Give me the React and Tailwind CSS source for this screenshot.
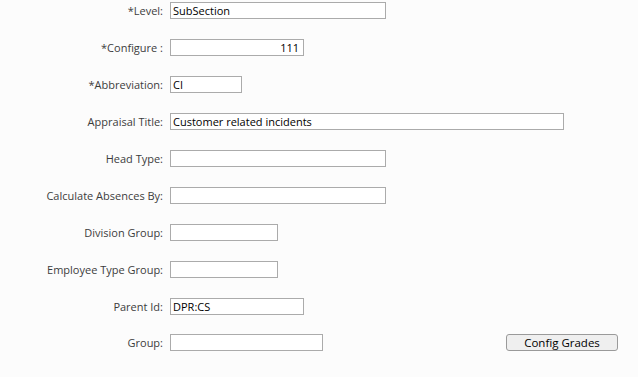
import React from "react";

const rows = [
  { label: "*Level:", value: "SubSection", w: "w-[216px]" },
  { label: "*Configure :", value: "111", w: "w-[134px]", right: true },
  { label: "*Abbreviation:", value: "CI", w: "w-[72px]" },
  { label: "Appraisal Title:", value: "Customer related incidents", w: "w-[394px]" },
  { label: "Head Type:", value: "", w: "w-[216px]" },
  { label: "Calculate Absences By:", value: "", w: "w-[216px]" },
  { label: "Division Group:", value: "", w: "w-[108px]" },
  { label: "Employee Type Group:", value: "", w: "w-[108px]" },
  { label: "Parent Id:", value: "DPR:CS", w: "w-[134px]" },
];

const font = { fontFamily: '"Open Sans", "Noto Sans", sans-serif' };

const Field = ({ value, w, right }) => (
  <div
    className={`${w} h-[17px] border border-[#ababab] bg-white flex items-center px-[2px] text-[11px] text-black leading-none ${
      right ? "justify-end pr-[4px]" : ""
    }`}
    style={font}
  >
    {value}
  </div>
);

const Label = ({ children }) => (
  <div
    className="w-[164px] pr-[1px] text-right text-[11px] text-[#3c3c3c] leading-none"
    style={font}
  >
    {children}
  </div>
);

export default function App() {
  return (
    <div className="w-[638px] h-[377px] bg-[#fcfcfc] overflow-hidden">
      <div className="flex flex-col gap-[20px] pt-[2px]">
        {rows.map((r) => (
          <div key={r.label} className="flex items-center gap-[6px]">
            <Label>{r.label}</Label>
            <Field value={r.value} w={r.w} right={r.right} />
          </div>
        ))}
        <div className="flex items-center gap-[6px] -mt-[1px]">
          <Label>Group:</Label>
          <Field value="" w="w-[153px]" />
          <button
            className="ml-[177px] w-[112px] h-[17px] rounded-[3px] border border-[#9a9a9a] bg-[#efefef] text-[11.5px] text-black leading-none flex items-center justify-center"
            style={font}
          >
            Config Grades
          </button>
        </div>
      </div>
    </div>
  );
}
